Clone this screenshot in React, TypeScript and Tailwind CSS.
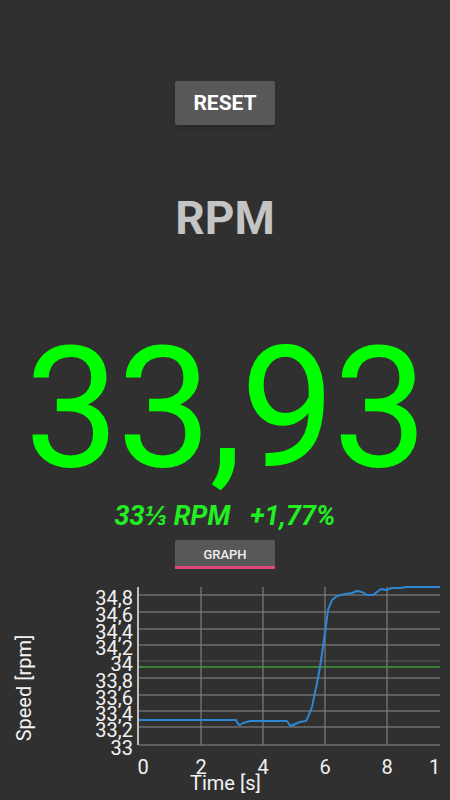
import React from 'react';

const yTicks = [
  { label: '34,8', y: 595 },
  { label: '34,6', y: 612 },
  { label: '34,4', y: 629 },
  { label: '34,2', y: 645 },
  { label: '34', y: 661 },
  { label: '33,8', y: 678 },
  { label: '33,6', y: 695 },
  { label: '33,4', y: 711 },
  { label: '33,2', y: 727 },
  { label: '33', y: 745 },
];

const xTicks = [
  { label: '2', x: 201 },
  { label: '4', x: 263 },
  { label: '6', x: 325 },
  { label: '8', x: 387 },
];

// speed trace, page coordinates
const trace: [number, number][] = [
  [139, 720], [236, 720], [238, 724], [240, 725], [243, 723], [250, 721], [287, 721],
  [289, 724], [291, 726], [295, 724], [300, 722], [306, 721], [308, 717], [312, 707],
  [317, 683], [320, 667], [325, 633], [328, 610], [332, 600], [337, 596], [345, 594],
  [352, 593], [357, 591], [362, 592], [367, 595], [373, 595], [377, 592], [381, 589],
  [386, 590], [392, 588], [400, 588], [407, 587], [440, 587],
];

const SpeedChart: React.FC = () => {
  const d = trace.map(([x, y], i) => `${i === 0 ? 'M' : 'L'}${x} ${y}`).join(' ');
  return (
    <svg width="450" height="231" viewBox="0 569 450 231" className="block">
      <defs>
        <clipPath id="plot">
          <rect x="0" y="569" width="440" height="231" />
        </clipPath>
      </defs>
      <g clipPath="url(#plot)">
        {/* grid */}
        {yTicks.map((t) => (
          <line key={t.label} x1="139" x2="440" y1={t.y} y2={t.y} stroke={t.label === '34' ? '#5a5a5a' : '#8a8a8a'} strokeWidth="1" />
        ))}
        {xTicks.map((t) => (
          <line key={t.label} x1={t.x} x2={t.x} y1="587" y2="745" stroke="#8a8a8a" strokeWidth="1" />
        ))}
        <line x1="139" x2="440" y1="667" y2="667" stroke="#3c9c3c" strokeWidth="1.5" />
        <path d={d} fill="none" stroke="#2f86d4" strokeWidth="2" strokeLinejoin="round" />
        <line x1="138" x2="138" y1="587" y2="745" stroke="#bdbdbd" strokeWidth="2" />

        {/* labels */}
        <g fill="#f2f2f2" fontFamily="Roboto, sans-serif" fontSize="20">
          {yTicks.map((t) => (
            <text key={t.label} x="133" y={t.y + 10} textAnchor="end">{t.label}</text>
          ))}
          <text x="143" y="774" textAnchor="middle">0</text>
          {xTicks.map((t) => (
            <text key={t.label} x={t.x} y="774" textAnchor="middle">{t.label}</text>
          ))}
          <text x="429" y="774">10</text>
          <text x="190" y="790">Time [s]</text>
          <text transform="translate(31,688) rotate(-90)" textAnchor="middle">Speed [rpm]</text>
        </g>
      </g>
    </svg>
  );
};

const App: React.FC = () => {
  return (
    <div className="min-h-screen w-[450px] bg-[#303030] flex flex-col items-center font-['Roboto',sans-serif] overflow-hidden">
      <button className="mt-[81px] w-[100px] h-[44px] bg-[#585858] rounded-[2px] text-white font-bold text-[21px] leading-none shadow-md">
        RESET
      </button>

      <h1 className="mt-[70px] text-[46px] leading-none font-bold text-[#c4c4c4]">RPM</h1>

      <div className="mt-[84px] text-[168px] leading-none text-[#00ff00] tracking-[-2px]">33,93</div>

      <div className="mt-[10px] text-[27px] leading-none font-bold italic text-[#22ee22] whitespace-pre">
        33⅓ RPM   +1,77%
      </div>

      <button className="mt-[10px] w-[100px] h-[29px] bg-[#585858] rounded-t-[2px] border-b-[3px] border-[#e2457a] text-[13px] font-medium text-[#eeeeee] leading-none pt-[2px]">
        GRAPH
      </button>

      <SpeedChart />
    </div>
  );
};

export default App;
